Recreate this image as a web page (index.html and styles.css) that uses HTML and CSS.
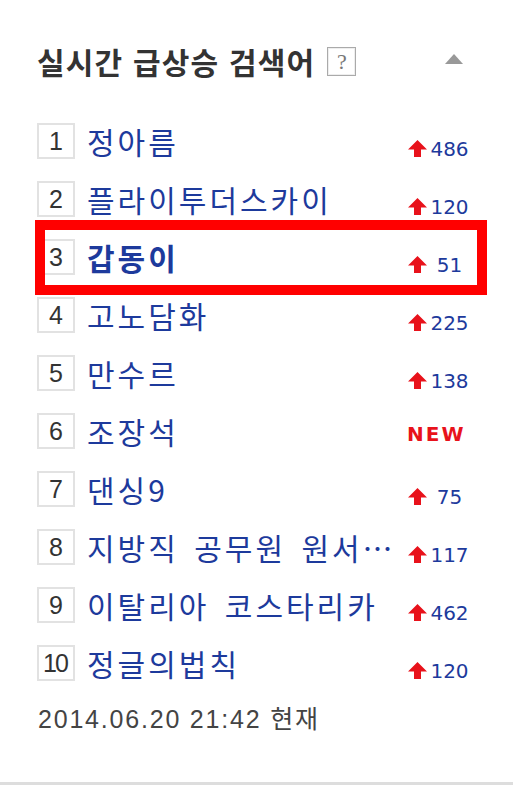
FILE: index.html
```html
<!DOCTYPE html>
<html lang="ko">
<head>
    <meta charset="UTF-8">
    <meta name="viewport" content="width=device-width, initial-scale=1.0">
    <title>실시간 급상승 검색어</title>
    <link rel="stylesheet" href="styles.css">
</head>
<body>
    <div class="widget">
        <div class="header">
            <h2 class="title">실시간 급상승 검색어</h2>
            <span class="help">?</span>
            <span class="fold"></span>
        </div>

        <ol class="ranking">
            <li>
                <span class="num">1</span><a class="keyword">정아름</a>
                <span class="change"><svg class="up" width="19" height="17" viewBox="0 0 19 17"><path d="M9.5 0 L19 9.5 H13 V17 H6 V9.5 H0 Z"/></svg><span class="count">486</span></span>
            </li>
            <li>
                <span class="num">2</span><a class="keyword">플라이투더스카이</a>
                <span class="change"><svg class="up" width="19" height="17" viewBox="0 0 19 17"><path d="M9.5 0 L19 9.5 H13 V17 H6 V9.5 H0 Z"/></svg><span class="count">120</span></span>
            </li>
            <li class="hot">
                <span class="num">3</span><a class="keyword">갑동이</a>
                <span class="change"><svg class="up" width="19" height="17" viewBox="0 0 19 17"><path d="M9.5 0 L19 9.5 H13 V17 H6 V9.5 H0 Z"/></svg><span class="count">51</span></span>
            </li>
            <li>
                <span class="num">4</span><a class="keyword">고노담화</a>
                <span class="change"><svg class="up" width="19" height="17" viewBox="0 0 19 17"><path d="M9.5 0 L19 9.5 H13 V17 H6 V9.5 H0 Z"/></svg><span class="count">225</span></span>
            </li>
            <li>
                <span class="num">5</span><a class="keyword">만수르</a>
                <span class="change"><svg class="up" width="19" height="17" viewBox="0 0 19 17"><path d="M9.5 0 L19 9.5 H13 V17 H6 V9.5 H0 Z"/></svg><span class="count">138</span></span>
            </li>
            <li>
                <span class="num">6</span><a class="keyword">조장석</a>
                <span class="change"><span class="new">NEW</span></span>
            </li>
            <li>
                <span class="num">7</span><a class="keyword">댄싱9</a>
                <span class="change"><svg class="up" width="19" height="17" viewBox="0 0 19 17"><path d="M9.5 0 L19 9.5 H13 V17 H6 V9.5 H0 Z"/></svg><span class="count">75</span></span>
            </li>
            <li>
                <span class="num">8</span><a class="keyword">지방직 공무원 원서⋯</a>
                <span class="change"><svg class="up" width="19" height="17" viewBox="0 0 19 17"><path d="M9.5 0 L19 9.5 H13 V17 H6 V9.5 H0 Z"/></svg><span class="count">117</span></span>
            </li>
            <li>
                <span class="num">9</span><a class="keyword">이탈리아 코스타리카</a>
                <span class="change"><svg class="up" width="19" height="17" viewBox="0 0 19 17"><path d="M9.5 0 L19 9.5 H13 V17 H6 V9.5 H0 Z"/></svg><span class="count">462</span></span>
            </li>
            <li>
                <span class="num ten">10</span><a class="keyword">정글의법칙</a>
                <span class="change"><svg class="up" width="19" height="17" viewBox="0 0 19 17"><path d="M9.5 0 L19 9.5 H13 V17 H6 V9.5 H0 Z"/></svg><span class="count">120</span></span>
            </li>
        </ol>

        <p class="time">2014.06.20 21:42 현재</p>

        <div class="highlight"></div>
    </div>
</body>
</html>
```

FILE: styles.css
```css
body {
    font-family: "Noto Sans CJK KR", "Noto Sans", sans-serif;
    margin: 0;
    padding: 0;
    background-color: #fff;
    overflow: hidden;
}
.widget {
    position: relative;
    height: 785px;
    box-sizing: border-box;
    padding: 45px 0 0 38px;
    border-bottom: 3px solid #ddd;
}
.header {
    display: flex;
    align-items: center;
    width: 425px;
    height: 32px;
}
.title {
    margin: 0 0 0 -1px;
    font-size: 30px;
    line-height: 32px;
    font-weight: bold;
    color: #333;
    letter-spacing: 1.2px;
}
.help {
    width: 27px;
    height: 27px;
    margin-left: 12px;
    border: 1px solid #aaa;
    box-shadow: inset 0 0 0 1px #eee;
    color: #777;
    font-family: "Liberation Serif", serif;
    font-size: 22px;
    line-height: 27px;
    text-align: center;
}
.fold {
    margin-left: auto;
    margin-top: -4px;
    width: 0;
    height: 0;
    border-left: 9px solid transparent;
    border-right: 9px solid transparent;
    border-bottom: 10px solid #999;
}
.ranking {
    list-style: none;
    margin: 35px 0 0 0;
    padding: 0;
    width: 434px;
}
.ranking li {
    display: flex;
    align-items: center;
    height: 58px;
}
.num {
    width: 34px;
    height: 32px;
    margin-left: -1px;
    border: 2px solid #e2e2e2;
    color: #333;
    font-family: "Liberation Sans", sans-serif;
    font-size: 25px;
    line-height: 32px;
    text-align: center;
}
.num.ten {
    letter-spacing: -2px;
    text-indent: -2px;
}
.keyword {
    flex: 1;
    margin-left: 12px;
    color: #1d3a9c;
    font-size: 30px;
    letter-spacing: 3px;
    word-spacing: 4px;
    white-space: nowrap;
}
.hot .keyword {
    font-weight: bold;
}
.change {
    display: flex;
    align-items: center;
    width: 65px;
    padding-top: 15px;
}
.up {
    margin-left: 1px;
    fill: #e8121b;
}
.count {
    width: 45px;
    color: #1d3a9c;
    font-family: "DejaVu Sans", sans-serif;
    font-size: 20px;
    line-height: 20px;
    text-align: center;
}
.new {
    margin-top: -10px;
    color: #e8121b;
    font-family: "DejaVu Sans", sans-serif;
    font-size: 20px;
    line-height: 20px;
    font-weight: bold;
    letter-spacing: 2px;
}
.time {
    margin: 12px 0 0 0;
    color: #444;
    font-family: "Liberation Sans", "Noto Sans CJK KR", sans-serif;
    font-size: 25px;
    line-height: 30px;
    letter-spacing: 1.8px;
}
.highlight {
    position: absolute;
    left: 35px;
    top: 220px;
    width: 432px;
    height: 55px;
    border: 10px solid #f00;
}
```
